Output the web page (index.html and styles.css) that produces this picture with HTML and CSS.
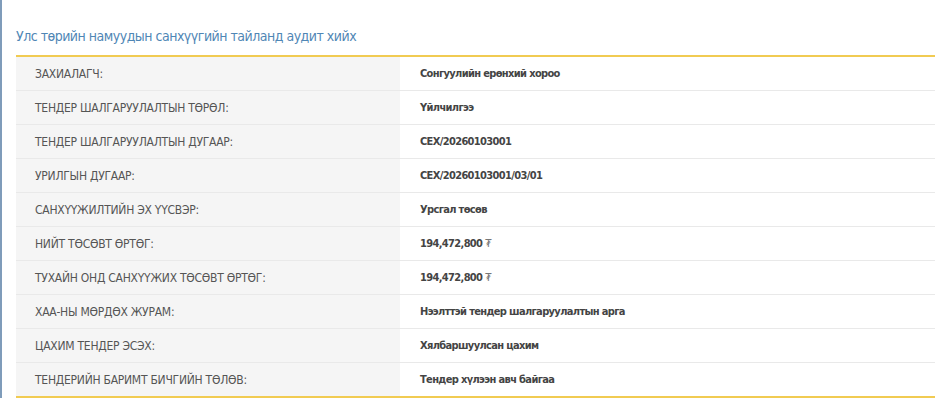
FILE: index.html
```html
<!DOCTYPE html>
<html lang="mn">
<head>
    <meta charset="UTF-8">
    <meta name="viewport" content="width=device-width, initial-scale=1.0">
    <title>Тендерийн мэдээлэл</title>
    <link rel="stylesheet" href="styles.css">
</head>
<body>
    <div class="page">
        <h2 class="tender-title">Улс төрийн намуудын санхүүгийн тайланд аудит хийх</h2>

        <table class="tender-info">
            <tr>
                <th>ЗАХИАЛАГЧ:</th>
                <td>Сонгуулийн ерөнхий хороо</td>
            </tr>
            <tr>
                <th>ТЕНДЕР ШАЛГАРУУЛАЛТЫН ТӨРӨЛ:</th>
                <td>Үйлчилгээ</td>
            </tr>
            <tr>
                <th>ТЕНДЕР ШАЛГАРУУЛАЛТЫН ДУГААР:</th>
                <td>CEX/20260103001</td>
            </tr>
            <tr>
                <th>УРИЛГЫН ДУГААР:</th>
                <td>CEX/20260103001/03/01</td>
            </tr>
            <tr>
                <th>САНХҮҮЖИЛТИЙН ЭХ ҮҮСВЭР:</th>
                <td>Урсгал төсөв</td>
            </tr>
            <tr>
                <th>НИЙТ ТӨСӨВТ ӨРТӨГ:</th>
                <td>194,472,800 <span class="currency">₮</span></td>
            </tr>
            <tr>
                <th>ТУХАЙН ОНД САНХҮҮЖИХ ТӨСӨВТ ӨРТӨГ:</th>
                <td>194,472,800 <span class="currency">₮</span></td>
            </tr>
            <tr>
                <th>ХАА-НЫ МӨРДӨХ ЖУРАМ:</th>
                <td>Нээлттэй тендер шалгаруулалтын арга</td>
            </tr>
            <tr>
                <th>ЦАХИМ ТЕНДЕР ЭСЭХ:</th>
                <td>Хялбаршуулсан цахим</td>
            </tr>
            <tr>
                <th>ТЕНДЕРИЙН БАРИМТ БИЧГИЙН ТӨЛӨВ:</th>
                <td>Тендер хүлээн авч байгаа</td>
            </tr>
        </table>
    </div>
</body>
</html>
```

FILE: styles.css
```css
body {
    margin: 0;
    background-color: #fff;
    font-family: 'DejaVu Sans Condensed', 'Liberation Sans', sans-serif;
    font-stretch: condensed;
    color: #555;
}

.page {
    border-left: 2px solid #7f9cba;
    padding: 26px 0 0 14px;
    height: 398px;
    box-sizing: border-box;
    overflow: hidden;
}

.tender-title {
    margin: 0 0 8px 0;
    font-size: 14px;
    letter-spacing: -0.5px;
    font-weight: normal;
    color: #4f86b5;
    line-height: 21px;
}

.tender-info {
    width: 100%;
    border-collapse: collapse;
    border-top: 2px solid #f1cb52;
    border-bottom: 2px solid #f1cb52;
}

.tender-info tr + tr th,
.tender-info tr + tr td {
    border-top: 1px solid #e9e9e9;
}

.tender-info th,
.tender-info td {
    height: 33px;
    padding: 0;
}

.tender-info th {
    width: 365px;
    padding-left: 19px;
    background-color: #f5f5f5;
    text-align: left;
    font-weight: normal;
    font-size: 12px;
    letter-spacing: -0.25px;
    color: #555;
}

.tender-info td {
    padding-left: 20px;
    background-color: #fff;
    font-size: 11px;
    letter-spacing: -0.65px;
    font-weight: bold;
    color: #444;
}

.currency {
    font-weight: normal;
    color: #777;
}
```
